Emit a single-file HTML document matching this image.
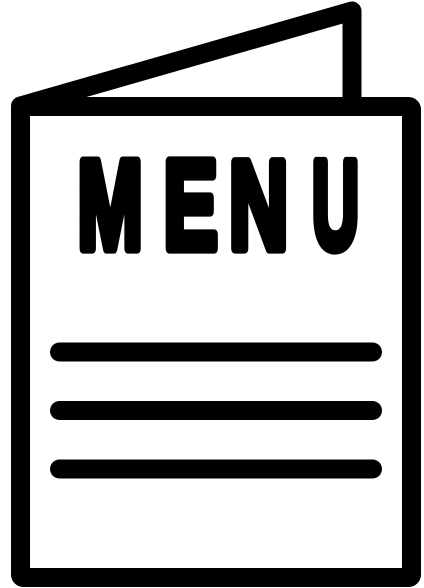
<!DOCTYPE html>
<html><head><style>html,body{margin:0;padding:0;background:#fff;}svg{display:block}</style></head>
<body>
<svg width="424" height="588" viewBox="0 0 424 588" xmlns="http://www.w3.org/2000/svg">
<g fill="none" stroke="#000" stroke-width="19" stroke-linejoin="round" stroke-linecap="round">
<path d="M20.5 106 L352 11 L352 106"/>
<rect x="20.5" y="106.5" width="391" height="471" rx="3"/>
<line x1="59.5" y1="352" x2="372.5" y2="352"/>
<line x1="59.5" y1="410.5" x2="372.5" y2="410.5"/>
<line x1="59.5" y1="469" x2="372.5" y2="469"/>
</g>
<g font-family="Liberation Sans, sans-serif" font-weight="bold" font-size="74" fill="#000" stroke="#000" stroke-width="6" stroke-linejoin="round">
<text transform="translate(77.5,0) scale(1.06,1.7)" x="0" y="146.2">M</text>
<text transform="translate(163.5,0) scale(1.1,1.7)" x="0" y="146.2">E</text>
<text transform="translate(229,0) scale(1.11,1.7)" x="0" y="146.2">N</text>
<text transform="translate(312,0) scale(0.88,1.7)" x="0" y="146.2">U</text>
</g>
</svg>
</body></html>
